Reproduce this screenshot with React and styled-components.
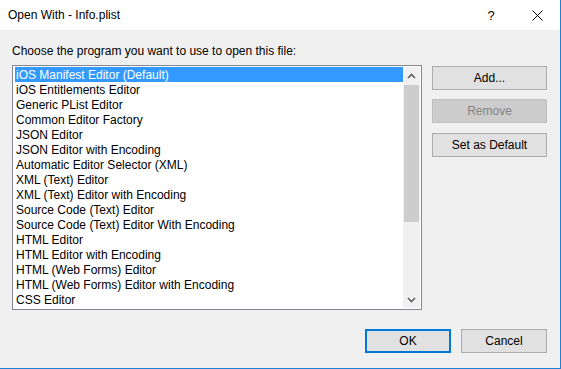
import React from 'react'
import styled, { createGlobalStyle } from 'styled-components'

const GlobalStyle = createGlobalStyle`
  html, body {
    margin: 0;
    padding: 0;
    background: #f0f0f0;
  }
  * { box-sizing: border-box; }
`

const Window = styled.div`
  width: 561px;
  height: 369px;
  display: flex;
  flex-direction: column;
  background: #f0f0f0;
  border-right: 1px solid #1883d7;
  border-bottom: 1px solid #1883d7;
  font-family: "Liberation Sans", Arial, sans-serif;
  font-size: 12px;
  color: #000;
  overflow: hidden;
`

const TitleBar = styled.div`
  height: 30px;
  flex: none;
  display: flex;
  align-items: center;
  background: #fff;
  padding-left: 8px;
`

const Title = styled.div`
  flex: 1;
  padding-bottom: 1px;
`

const TitleButton = styled.div`
  width: 46px;
  height: 30px;
  display: flex;
  align-items: center;
  justify-content: center;
  font-size: 13px;
`

const Body = styled.div`
  flex: 1;
  display: flex;
  flex-direction: column;
  padding: 13px 13px 0 12px;
`

const Prompt = styled.div`
  line-height: 16px;
  margin-bottom: 6px;
`

const MainRow = styled.div`
  display: flex;
  align-items: flex-start;
  gap: 10px;
`

const ListBox = styled.div`
  width: 411px;
  height: 245px;
  display: flex;
  background: #fff;
  border: 1px solid #828790;
  padding: 1px 1px 1px 2px;
`

const Items = styled.div`
  flex: 1;
  overflow: hidden;
`

const Item = styled.div`
  height: 15px;
  line-height: 16px;
  padding-left: 1px;
  white-space: nowrap;
  background: ${p => (p.$selected ? '#3399ff' : 'transparent')};
  color: ${p => (p.$selected ? '#fff' : '#000')};
`

const ScrollBar = styled.div`
  width: 17px;
  display: flex;
  flex-direction: column;
  background: #f0f0f0;
`

const Arrow = styled.div`
  height: 17px;
  flex: none;
  display: flex;
  align-items: center;
  justify-content: center;
`

const Track = styled.div`
  flex: 1;
  padding: 1px 0 0 1px;
`

const Thumb = styled.div`
  height: 137px;
  width: 15px;
  background: #cdcdcd;
`

const SideButtons = styled.div`
  display: flex;
  flex-direction: column;
  padding-top: 1px;
  gap: 9px;
`

const Button = styled.div`
  width: ${p => p.$width || 115}px;
  height: 24px;
  display: flex;
  align-items: center;
  justify-content: center;
  background: ${p => (p.$disabled ? '#cccccc' : '#e1e1e1')};
  border: ${p => (p.$primary ? '2px solid #0078d7' : p.$disabled ? '1px solid #bfbfbf' : '1px solid #adadad')};
  color: ${p => (p.$disabled ? '#838383' : '#000')};
  margin-top: ${p => p.$gap || 0}px;
`

const Footer = styled.div`
  display: flex;
  justify-content: flex-end;
  gap: 10px;
  margin-top: 19px;
`

const items = [
  'iOS Manifest Editor (Default)',
  'iOS Entitlements Editor',
  'Generic PList Editor',
  'Common Editor Factory',
  'JSON Editor',
  'JSON Editor with Encoding',
  'Automatic Editor Selector (XML)',
  'XML (Text) Editor',
  'XML (Text) Editor with Encoding',
  'Source Code (Text) Editor',
  'Source Code (Text) Editor With Encoding',
  'HTML Editor',
  'HTML Editor with Encoding',
  'HTML (Web Forms) Editor',
  'HTML (Web Forms) Editor with Encoding',
  'CSS Editor',
]

const Chevron = ({ up }) => (
  <svg width="9" height="6" viewBox="0 0 9 6">
    <path
      d={up ? 'M1 5 L4.5 1.5 L8 5' : 'M1 1 L4.5 4.5 L8 1'}
      fill="none"
      stroke="#606060"
      strokeWidth="1.6"
    />
  </svg>
)

const CloseIcon = () => (
  <svg width="11" height="11" viewBox="0 0 11 11">
    <path d="M0.5 0.5 L10.5 10.5 M10.5 0.5 L0.5 10.5" stroke="#000" strokeWidth="1" />
  </svg>
)

const App = () => (
  <>
    <GlobalStyle />
    <Window>
      <TitleBar>
        <Title>Open With - Info.plist</Title>
        <TitleButton>?</TitleButton>
        <TitleButton>
          <CloseIcon />
        </TitleButton>
      </TitleBar>
      <Body>
        <Prompt>Choose the program you want to use to open this file:</Prompt>
        <MainRow>
          <ListBox>
            <Items>
              {items.map((name, i) => (
                <Item key={name} $selected={i === 0}>
                  {name}
                </Item>
              ))}
            </Items>
            <ScrollBar>
              <Arrow>
                <Chevron up />
              </Arrow>
              <Track>
                <Thumb />
              </Track>
              <Arrow>
                <Chevron />
              </Arrow>
            </ScrollBar>
          </ListBox>
          <SideButtons>
            <Button>Add...</Button>
            <Button $disabled>Remove</Button>
            <Button $gap={1}>Set as Default</Button>
          </SideButtons>
        </MainRow>
        <Footer>
          <Button $width={86} $primary>OK</Button>
          <Button $width={86}>Cancel</Button>
        </Footer>
      </Body>
    </Window>
  </>
)

export default App
